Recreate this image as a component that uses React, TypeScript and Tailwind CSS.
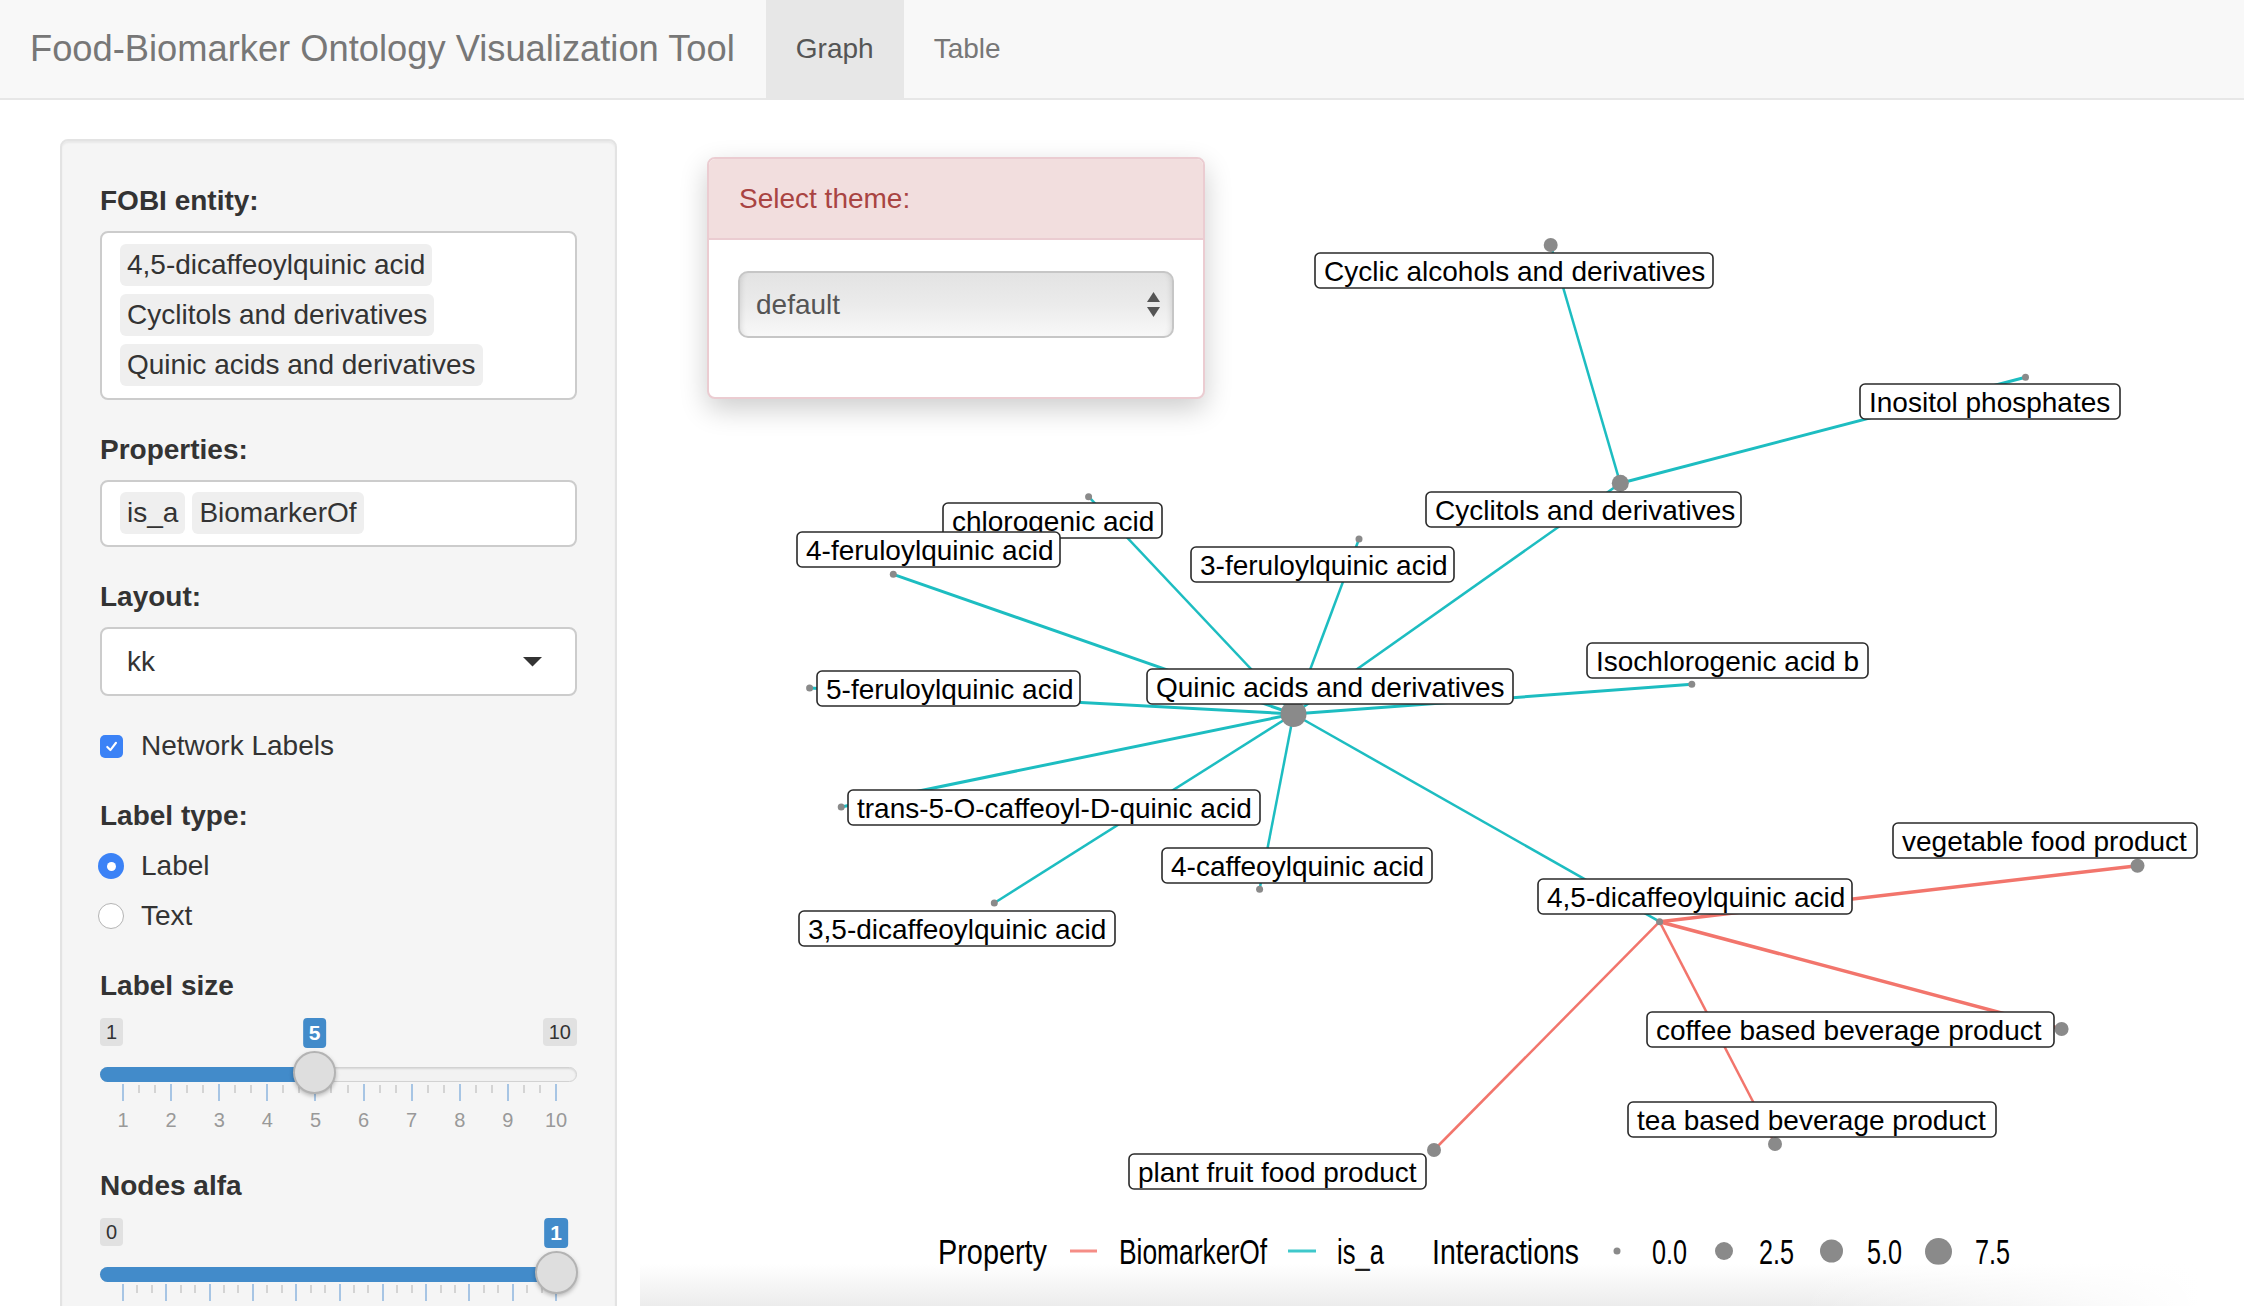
import React from 'react';

type GNode = { id: string; x: number; y: number; r: number };
type GLabel = { text: string; x: number; y: number; w: number };
type GEdge = { a: string; b: string; kind: 'is_a' | 'bio'; w: number };

const nodes: GNode[] = [
  { id: 'cyclic', x: 1550.7, y: 245, r: 7 },
  { id: 'inositol', x: 2025.5, y: 377.3, r: 3.5 },
  { id: 'cyclitols', x: 1620.3, y: 483.3, r: 8.5 },
  { id: 'chloro', x: 1088.6, y: 496.7, r: 3.5 },
  { id: 'fq4', x: 893.3, y: 574.3, r: 3.5 },
  { id: 'fq3', x: 1359, y: 539, r: 3.5 },
  { id: 'isob', x: 1691.8, y: 684.3, r: 3.5 },
  { id: 'fq5', x: 809.6, y: 688, r: 3.5 },
  { id: 'quinic', x: 1293.5, y: 714, r: 13 },
  { id: 'trans5', x: 841.2, y: 807, r: 3.5 },
  { id: 'cq4', x: 1259.6, y: 889.3, r: 3.5 },
  { id: 'dcq35', x: 994.3, y: 903, r: 3.5 },
  { id: 'veg', x: 2137.5, y: 865.7, r: 7 },
  { id: 'dcq45', x: 1659.6, y: 921.7, r: 3.5 },
  { id: 'coffee', x: 2061.6, y: 1029, r: 7 },
  { id: 'tea', x: 1775, y: 1144, r: 7 },
  { id: 'plant', x: 1434, y: 1150, r: 7 },
];

const labels: GLabel[] = [
  { text: 'Cyclic alcohols and derivatives', x: 1315, y: 253, w: 398 },
  { text: 'Inositol phosphates', x: 1860, y: 384, w: 260 },
  { text: 'Cyclitols and derivatives', x: 1426, y: 492, w: 315 },
  { text: 'chlorogenic acid', x: 943, y: 503, w: 219 },
  { text: '4-feruloylquinic acid', x: 797, y: 532, w: 263 },
  { text: '3-feruloylquinic acid', x: 1191, y: 547, w: 263 },
  { text: 'Isochlorogenic acid b', x: 1587, y: 643, w: 281 },
  { text: '5-feruloylquinic acid', x: 817, y: 671, w: 263 },
  { text: 'Quinic acids and derivatives', x: 1147, y: 669, w: 366 },
  { text: 'trans-5-O-caffeoyl-D-quinic acid', x: 848, y: 790, w: 412 },
  { text: '4-caffeoylquinic acid', x: 1162, y: 848, w: 270 },
  { text: '3,5-dicaffeoylquinic acid', x: 799, y: 911, w: 316 },
  { text: 'vegetable food product', x: 1893, y: 823, w: 304 },
  { text: '4,5-dicaffeoylquinic acid', x: 1538, y: 879, w: 314 },
  { text: 'coffee based beverage product', x: 1647, y: 1012, w: 407 },
  { text: 'tea based beverage product', x: 1628, y: 1102, w: 368 },
  { text: 'plant fruit food product', x: 1129, y: 1154, w: 297 },
];

const edges: GEdge[] = [
  { a: 'cyclitols', b: 'cyclic', kind: 'is_a', w: 2.5 },
  { a: 'cyclitols', b: 'inositol', kind: 'is_a', w: 3 },
  { a: 'quinic', b: 'cyclitols', kind: 'is_a', w: 2.5 },
  { a: 'quinic', b: 'chloro', kind: 'is_a', w: 2.5 },
  { a: 'quinic', b: 'fq4', kind: 'is_a', w: 3 },
  { a: 'quinic', b: 'fq3', kind: 'is_a', w: 2.5 },
  { a: 'quinic', b: 'isob', kind: 'is_a', w: 3 },
  { a: 'quinic', b: 'fq5', kind: 'is_a', w: 3 },
  { a: 'quinic', b: 'trans5', kind: 'is_a', w: 3 },
  { a: 'quinic', b: 'cq4', kind: 'is_a', w: 2.5 },
  { a: 'quinic', b: 'dcq35', kind: 'is_a', w: 2.5 },
  { a: 'quinic', b: 'dcq45', kind: 'is_a', w: 2.5 },
  { a: 'dcq45', b: 'veg', kind: 'bio', w: 3.5 },
  { a: 'dcq45', b: 'coffee', kind: 'bio', w: 3.5 },
  { a: 'dcq45', b: 'tea', kind: 'bio', w: 2.5 },
  { a: 'dcq45', b: 'plant', kind: 'bio', w: 2.5 },
];

const byId = (id: string) => nodes.find((n) => n.id === id)!;

function Tag({ children }: { children: React.ReactNode }) {
  return (
    <span className="h-[42px] px-[7px] rounded-[6px] bg-[#efefef] text-[28px] leading-[42px] text-[#333] whitespace-nowrap">
      {children}
    </span>
  );
}

function Label({ children }: { children: React.ReactNode }) {
  return <div className="text-[28px] leading-[40px] font-bold text-[#333] mb-[10px]">{children}</div>;
}

interface SliderProps {
  minLabel: string;
  maxLabel: string;
  valueLabel: string;
  pos: number;
  majors: number;
  gridLabels: string[];
}

function RangeSlider({ minLabel, maxLabel, valueLabel, pos, majors, gridLabels }: SliderProps) {
  const start = 23;
  const end = 456;
  const step = (end - start) / (majors - 1);
  const majorXs = Array.from({ length: majors }, (_, i) => start + i * step);
  const minorXs: number[] = [];
  for (let i = 0; i < majors - 1; i++) {
    minorXs.push(start + i * step + step / 3, start + i * step + (2 * step) / 3);
  }
  return (
    <div className="relative h-[130px]">
      <span className="absolute left-0 top-[12px] h-[28px] px-[6px] rounded-[4px] bg-[#e1e1e1] text-[20px] leading-[28px] text-[#333]">
        {minLabel}
      </span>
      {maxLabel && (
        <span className="absolute right-0 top-[12px] h-[28px] px-[6px] rounded-[4px] bg-[#e1e1e1] text-[20px] leading-[28px] text-[#333]">
          {maxLabel}
        </span>
      )}
      <div className="absolute top-[61px] left-0 right-0 h-[15px] rounded-full bg-[#f2f2f2] border border-[#d2d2d2] shadow-[inset_0_1px_2px_rgba(0,0,0,0.12)]" />
      <div className="absolute top-[61px] left-0 h-[15px] rounded-l-full bg-[#428bca]" style={{ width: pos }} />
      {minorXs.map((x, i) => (
        <div key={'m' + i} className="absolute top-[79px] w-[2px] h-[8px] bg-[#d4d4d4]" style={{ left: x - 1 }} />
      ))}
      {majorXs.map((x, i) => (
        <div key={'M' + i} className="absolute top-[78px] w-[2px] h-[17px] bg-[#a7c5e4]" style={{ left: x - 1 }} />
      ))}
      {gridLabels.map((t, i) => (
        <span
          key={'L' + i}
          className="absolute top-[104px] w-[40px] -ml-[20px] text-center text-[20px] leading-[20px] text-[#999]"
          style={{ left: majorXs[i] }}
        >
          {t}
        </span>
      ))}
      <span
        className="absolute top-[12px] h-[30px] px-[6px] -translate-x-1/2 rounded-[4px] bg-[#428bca] text-white text-[21px] leading-[30px] font-semibold"
        style={{ left: pos }}
      >
        {valueLabel}
      </span>
      <div
        className="absolute top-[45px] w-[43px] h-[43px] rounded-full bg-[#dedede] border-2 border-[#b3b3b3] shadow-[0_2px_4px_rgba(0,0,0,0.25)]"
        style={{ left: pos - 21.5 }}
      />
    </div>
  );
}

function Sidebar() {
  return (
    <div className="w-[617px] shrink-0 pl-[60px] pt-[39px]">
      <div className="w-[557px] h-[1300px] rounded-[8px] border-2 border-[#e3e3e3] bg-[#f5f5f5] px-[38px] pt-[40px] shadow-[inset_0_2px_2px_rgba(0,0,0,0.05)]">
        <Label>FOBI entity:</Label>
        <div className="flex flex-col items-start gap-[8px] rounded-[8px] border-2 border-[#cccccc] bg-white pl-[18px] pt-[11px] pb-[12px] mb-[30px]">
          <Tag>4,5-dicaffeoylquinic acid</Tag>
          <Tag>Cyclitols and derivatives</Tag>
          <Tag>Quinic acids and derivatives</Tag>
        </div>

        <Label>Properties:</Label>
        <div className="flex items-start gap-[7px] h-[67px] rounded-[8px] border-2 border-[#cccccc] bg-white pl-[18px] pt-[10px] mb-[30px]">
          <Tag>is_a</Tag>
          <Tag>BiomarkerOf</Tag>
        </div>

        <Label>Layout:</Label>
        <div className="flex items-center justify-between h-[69px] rounded-[8px] border-2 border-[#cccccc] bg-white pl-[25px] pr-[33px] mb-[30px]">
          <span className="text-[28px] text-[#333]">kk</span>
          <svg width="19" height="10" viewBox="0 0 19 10">
            <polygon points="0,0 19,0 9.5,9.5" fill="#333" />
          </svg>
        </div>

        <div className="flex items-center h-[40px] mb-[30px]">
          <span className="flex items-center justify-center w-[23px] h-[23px] rounded-[5px] bg-[#3b82f6]">
            <svg width="15" height="15" viewBox="0 0 16 16">
              <path d="M3.5 8.5 L6.8 11.8 L12.8 4" fill="none" stroke="#fff" strokeWidth="2.2" strokeLinecap="round" strokeLinejoin="round" />
            </svg>
          </span>
          <span className="ml-[18px] text-[28px] text-[#333]">Network Labels</span>
        </div>

        <Label>Label type:</Label>
        <div className="flex items-center h-[40px] mb-[10px]">
          <span className="flex items-center justify-center w-[26px] h-[26px] -ml-[2px] rounded-full bg-[#3b82f6]">
            <span className="w-[9px] h-[9px] rounded-full bg-white" />
          </span>
          <span className="ml-[17px] text-[28px] text-[#333]">Label</span>
        </div>
        <div className="flex items-center h-[40px] mb-[30px]">
          <span className="w-[26px] h-[26px] -ml-[2px] rounded-full bg-white border-[1.5px] border-[#b4b4b4]" />
          <span className="ml-[17px] text-[28px] text-[#333]">Text</span>
        </div>

        <Label>Label size</Label>
        <div className="-mt-[10px] mb-[30px]">
          <RangeSlider
            minLabel="1"
            maxLabel="10"
            valueLabel="5"
            pos={214.5}
            majors={10}
            gridLabels={['1', '2', '3', '4', '5', '6', '7', '8', '9', '10']}
          />
        </div>

        <Label>Nodes alfa</Label>
        <div className="-mt-[10px]">
          <RangeSlider minLabel="0" maxLabel="" valueLabel="1" pos={456} majors={11} gridLabels={[]} />
        </div>
      </div>
    </div>
  );
}

function Graph() {
  return (
    <svg width="1627" height="1206" viewBox="0 0 1627 1206" className="block" fontFamily="Liberation Sans, Arial, sans-serif">
      <g transform="translate(-617,-100)">
        {edges.map((e, i) => {
          const a = byId(e.a);
          const b = byId(e.b);
          return (
            <line
              key={i}
              x1={a.x}
              y1={a.y}
              x2={b.x}
              y2={b.y}
              stroke={e.kind === 'is_a' ? '#1dbdc1' : '#f2756c'}
              strokeWidth={e.w}
            />
          );
        })}
        {nodes.map((n) => (
          <circle key={n.id} cx={n.x} cy={n.y} r={n.r} fill="#8a8a8a" />
        ))}
        {labels.map((l) => (
          <g key={l.text}>
            <rect x={l.x} y={l.y} width={l.w} height={35} rx={5} fill="#fff" stroke="#2a2a2a" strokeWidth={1.6} />
            <text x={l.x + 9} y={l.y + 28} fontSize={28} fill="#000">
              {l.text}
            </text>
          </g>
        ))}

        {/* legend */}
        <g fontSize={35} fill="#000">
          <text x={938} y={1264} textLength={109} lengthAdjust="spacingAndGlyphs">Property</text>
          <line x1={1070} y1={1251} x2={1097} y2={1251} stroke="#f58d86" strokeWidth={3} />
          <text x={1119} y={1264} textLength={148} lengthAdjust="spacingAndGlyphs">BiomarkerOf</text>
          <line x1={1288} y1={1251} x2={1316} y2={1251} stroke="#3fc8cb" strokeWidth={3} />
          <text x={1337} y={1264} textLength={47} lengthAdjust="spacingAndGlyphs">is_a</text>
          <text x={1432} y={1264} textLength={147} lengthAdjust="spacingAndGlyphs">Interactions</text>
          <circle cx={1617} cy={1251} r={3.5} fill="#8a8a8a" />
          <text x={1652} y={1264} textLength={35} lengthAdjust="spacingAndGlyphs">0.0</text>
          <circle cx={1724} cy={1251} r={9} fill="#8a8a8a" />
          <text x={1759} y={1264} textLength={35} lengthAdjust="spacingAndGlyphs">2.5</text>
          <circle cx={1831.5} cy={1251} r={11.5} fill="#8a8a8a" />
          <text x={1867} y={1264} textLength={35} lengthAdjust="spacingAndGlyphs">5.0</text>
          <circle cx={1938.5} cy={1251.5} r={13.5} fill="#8a8a8a" />
          <text x={1975} y={1264} textLength={35} lengthAdjust="spacingAndGlyphs">7.5</text>
        </g>
      </g>
    </svg>
  );
}

function ThemePanel() {
  return (
    <div className="absolute left-[90px] top-[57px] w-[498px] h-[242px] rounded-[8px] border-2 border-[#ebccd1] bg-white shadow-[0_10px_28px_rgba(0,0,0,0.2)] overflow-hidden">
      <div className="h-[81px] bg-[#f2dede] border-b-2 border-[#ebccd1] pl-[30px] flex items-center">
        <span className="text-[28px] text-[#a94442]">Select theme:</span>
      </div>
      <div className="pt-[31px] px-[29px]">
        <div className="flex items-center justify-between h-[67px] rounded-[10px] border-2 border-[#c6c6c6] bg-gradient-to-b from-[#e3e3e3] via-[#ebebeb] to-[#f8f8f8] pl-[16px] pr-[12px] shadow-[inset_6px_0_6px_-6px_rgba(0,0,0,0.15),inset_-6px_0_6px_-6px_rgba(0,0,0,0.15)]">
          <span className="text-[28px] text-[#555]">default</span>
          <svg width="13" height="26" viewBox="0 0 13 26">
            <polygon points="6.5,0 13,10 0,10" fill="#555" />
            <polygon points="0,15 13,15 6.5,25" fill="#555" />
          </svg>
        </div>
      </div>
    </div>
  );
}

export default function App() {
  return (
    <div className="relative w-[2244px] h-[1306px] overflow-hidden bg-white font-['Liberation_Sans',Arial,sans-serif]">
      <nav className="flex items-stretch h-[100px] bg-[#f8f8f8] border-b-2 border-[#e7e7e7]">
        <div className="flex items-center pl-[30px] pr-[31px] text-[36.3px] text-[#777] whitespace-nowrap">
          Food-Biomarker Ontology Visualization Tool
        </div>
        <div className="flex items-center px-[30px] bg-[#e7e7e7] text-[28px] text-[#555]">Graph</div>
        <div className="flex items-center px-[30px] text-[28px] text-[#777]">Table</div>
      </nav>

      <div className="flex">
        <Sidebar />
        <main className="relative flex-1">
          <Graph />
          <ThemePanel />
        </main>
      </div>

      {/* soft shade along the bottom edge */}
      <div className="absolute bottom-0 left-[640px] w-[1560px] h-[42px] bg-gradient-to-b from-[#ffffff00] to-[#ececec] pointer-events-none" />
      <div className="absolute bottom-0 left-[1800px] w-[400px] h-[42px] bg-gradient-to-r from-[#ffffff00] to-white pointer-events-none" />
    </div>
  );
}
